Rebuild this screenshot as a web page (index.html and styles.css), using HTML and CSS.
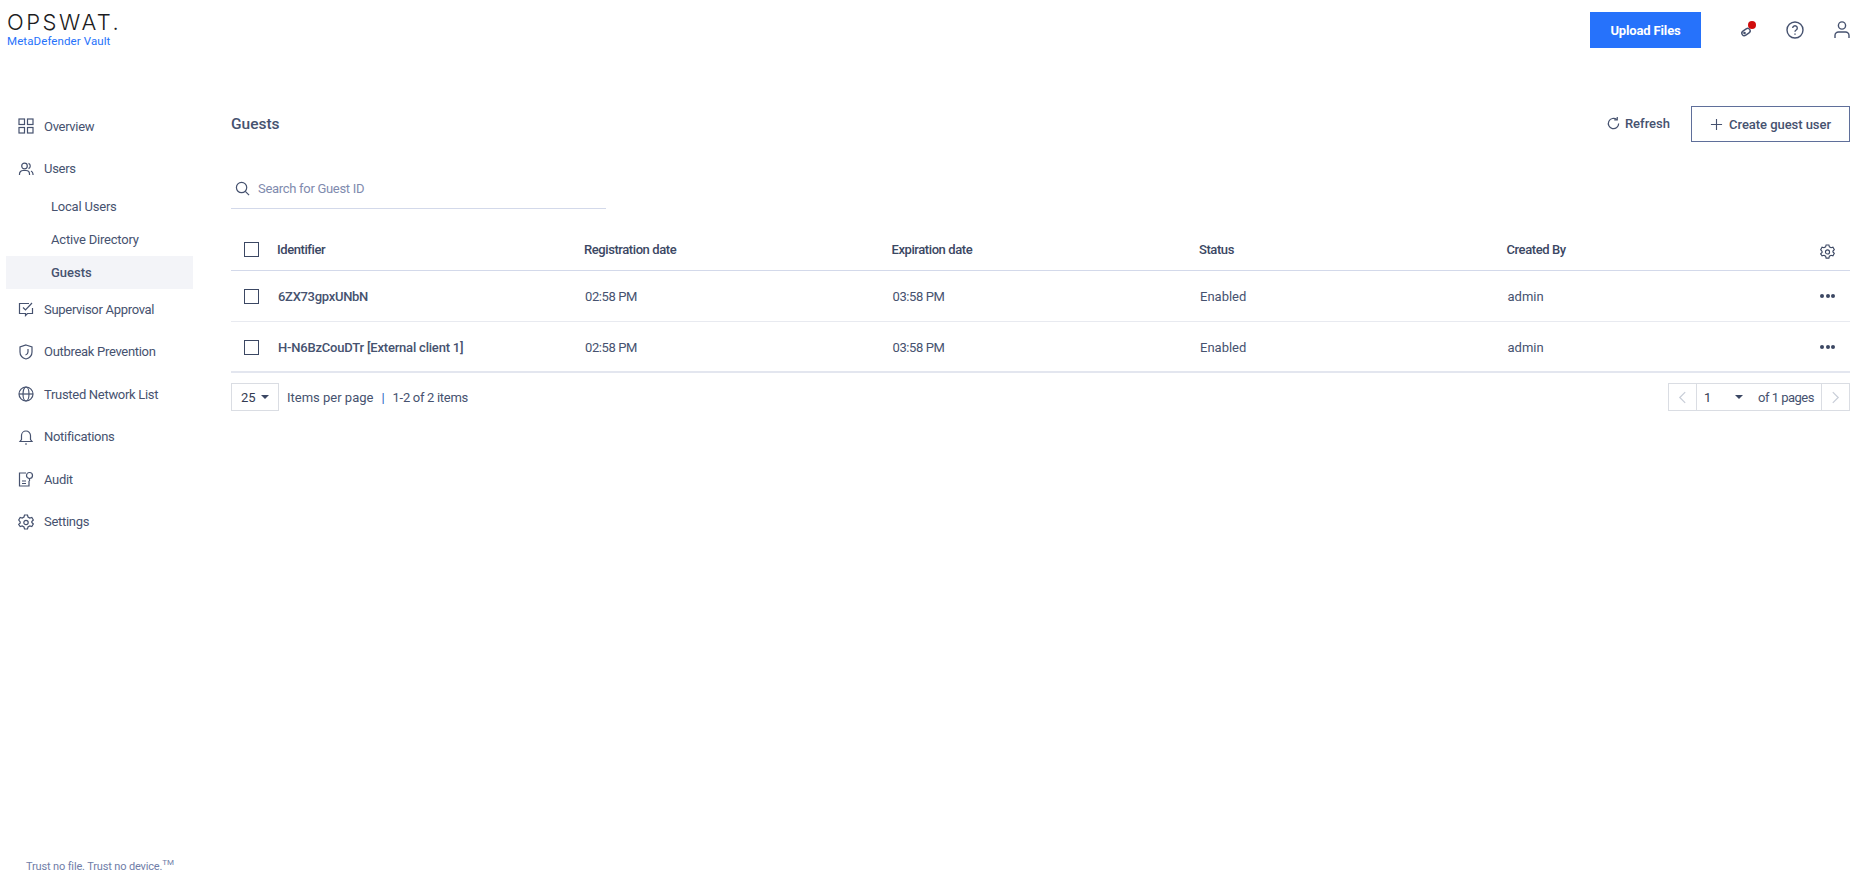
FILE: index.html
```html
<!DOCTYPE html>
<html lang="en">
<head>
<meta charset="utf-8">
<title>Guests</title>
<link rel="stylesheet" href="styles.css">
</head>
<body>
<div class="app">
  <header class="topbar">
    <div class="brand">
      <div class="logo">OPSWAT.</div>
      <div class="product">MetaDefender Vault</div>
    </div>
    <div class="top-actions">
      <button class="upload">Upload Files</button>
      <span class="top-icon key">
        <svg viewBox="0 0 20 20" width="20" height="20" fill="none" stroke="#46526f" stroke-width="1.4"><rect x="3.5" y="9.500" width="9" height="5" rx="2.500" transform="rotate(-35 8 12)"/><circle cx="6.500" cy="13" r=".6"/></svg>
        <i class="dot"></i>
      </span>
      <span class="top-icon">
        <svg viewBox="0 0 20 20" width="20" height="20" fill="none" stroke="#46526f" stroke-width="1.4"><circle cx="10" cy="10" r="8"/><path d="M7.7 8a2.3 2.3 0 1 1 3.5 2c-.8.5-1.2 1-1.2 1.8"/><path d="M10 13.6v1.2"/></svg>
      </span>
      <span class="top-icon">
        <svg viewBox="0 0 20 20" width="20" height="20" fill="none" stroke="#46526f" stroke-width="1.4"><circle cx="10" cy="5.5" r="3.6"/><path d="M3 18v-2.500a3.500 3.500 0 0 1 3.500-3.500h7a3.500 3.500 0 0 1 3.500 3.500V18"/></svg>
      </span>
    </div>
  </header>

  <div class="body">
    <aside class="sidebar">
      <nav class="nav">
        <a class="nav-item"><svg viewBox="0 0 16 16" class="ico"><rect x="1" y="1" width="5.500" height="5.500"/><rect x="9.500" y="1" width="5.500" height="5.500"/><rect x="1" y="9.500" width="5.500" height="5.500"/><rect x="9.500" y="9.500" width="5.500" height="5.500"/></svg>Overview</a>
        <a class="nav-item"><svg viewBox="0 0 16 16" class="ico"><circle cx="6.500" cy="5" r="2.800"/><path d="M1.500 14v-1a3.500 3.500 0 0 1 3.500-3.500h3a3.500 3.500 0 0 1 3.500 3.500v1"/><path d="M10.500 2.400a2.800 2.800 0 0 1 0 5.200M13 10a3.500 3.500 0 0 1 2 3v1"/></svg>Users</a>
        <div class="subnav">
          <a class="sub-item">Local Users</a>
          <a class="sub-item">Active Directory</a>
          <a class="sub-item active">Guests</a>
        </div>
        <a class="nav-item"><svg viewBox="0 0 16 16" class="ico"><path d="M14.500 7v5.500h-5l-2 2v-2H1.500V2.500H11"/><path d="M5 6.500l2.500 2.500 6.500-7"/></svg>Supervisor Approval</a>
        <a class="nav-item"><svg viewBox="0 0 16 16" class="ico"><path d="M8 1l6 2v5c0 3.500-2.500 6-6 7-3.500-1-6-3.500-6-7V3z"/><path d="M10 5v3c0 1.500-1 2.500-2.500 3"/></svg>Outbreak Prevention</a>
        <a class="nav-item"><svg viewBox="0 0 16 16" class="ico"><circle cx="8" cy="8" r="7"/><ellipse cx="8" cy="8" rx="3" ry="7"/><path d="M1 8h14"/></svg>Trusted Network List</a>
        <a class="nav-item"><svg viewBox="0 0 16 16" class="ico"><path d="M2 12.500h12l-1.500-2V6.500a4.500 4.500 0 0 0-9 0v4z"/><path d="M7 15h2"/></svg>Notifications</a>
        <a class="nav-item"><svg viewBox="0 0 16 16" class="ico"><path d="M8 2H1.500v13h9.500V10"/><circle cx="11.500" cy="4.500" r="3"/><path d="M11.500 7.500V10M4 10h4M4 12.500h4"/></svg>Audit</a>
        <a class="nav-item"><svg viewBox="0 0 16 16" class="ico"><path d="M6.500 1h3l.5 2 1.800 1 2-.6 1.500 2.600-1.500 1.500v1l1.500 1.500-1.500 2.600-2-.6-1.800 1-.5 2h-3l-.5-2-1.800-1-2 .6L.7 10.500 2.200 9V8L.7 6l1.500-2.600 2 .6L6 3z"/><circle cx="8" cy="8.500" r="2.200"/></svg>Settings</a>
      </nav>
      <div class="tagline">Trust no file. Trust no device.<sup>TM</sup></div>
    </aside>

    <main class="main">
      <div class="title-row">
        <h1>Guests</h1>
        <div class="title-actions">
          <button class="refresh"><svg viewBox="0 0 16 16" width="15" height="15" fill="none" stroke="#46526f" stroke-width="1.300"><path d="M13.500 8A5.500 5.500 0 1 1 11.500 3.800"/><path d="M12 1v3.200H8.800" /></svg>Refresh</button>
          <button class="create"><svg viewBox="0 0 14 14" width="13" height="13" fill="none" stroke="#46526f" stroke-width="1.200"><path d="M7 1v12M1 7h12"/></svg>Create guest user</button>
        </div>
      </div>

      <div class="search">
        <svg viewBox="0 0 16 16" width="15" height="15" fill="none" stroke="#46526f" stroke-width="1.300"><circle cx="7" cy="7" r="5.500"/><path d="M11 11l4 4"/></svg>
        <span>Search for Guest ID</span>
      </div>

      <div class="table">
        <div class="row head">
          <span class="check"></span>
          <span class="cell c1">Identifier</span>
          <span class="cell">Registration date</span>
          <span class="cell">Expiration date</span>
          <span class="cell">Status</span>
          <span class="cell">Created By</span>
          <span class="end"><svg viewBox="0 0 16 16" width="15" height="15" fill="none" stroke="#3b4763" stroke-width="1.200"><path d="M6.500 1h3l.5 2 1.800 1 2-.6 1.500 2.600-1.500 1.500v1l1.500 1.500-1.500 2.600-2-.6-1.800 1-.5 2h-3l-.5-2-1.800-1-2 .6L.7 10.500 2.200 9V8L.7 6l1.500-2.600 2 .6L6 3z"/><circle cx="8" cy="8.500" r="2.200"/></svg></span>
        </div>
        <div class="row">
          <span class="check"></span>
          <span class="cell c1 strong">6ZX73gpxUNbN</span>
          <span class="cell time">02:58 PM</span>
          <span class="cell time">03:58 PM</span>
          <span class="cell">Enabled</span>
          <span class="cell">admin</span>
          <span class="end dots"><i></i><i></i><i></i></span>
        </div>
        <div class="row last">
          <span class="check"></span>
          <span class="cell c1 strong wide">H-N6BzCouDTr [External client 1]</span>
          <span class="cell time">02:58 PM</span>
          <span class="cell time">03:58 PM</span>
          <span class="cell">Enabled</span>
          <span class="cell">admin</span>
          <span class="end dots"><i></i><i></i><i></i></span>
        </div>
      </div>

      <div class="pager">
        <div class="pager-left">
          <span class="size">25<i class="caret"></i></span>
          <span class="per">Items per page</span>
          <span class="sep">|</span>
          <span class="count">1-2 of 2 items</span>
        </div>
        <div class="pages">
          <span class="arrow"><svg viewBox="0 0 10 14" width="9" height="13" fill="none" stroke="#c9ced8" stroke-width="1.400"><path d="M8 1L2 7l6 6"/></svg></span>
          <span class="page-no"><b>1</b><i class="caret"></i><span class="of">of 1 pages</span></span>
          <span class="arrow"><svg viewBox="0 0 10 14" width="9" height="13" fill="none" stroke="#c9ced8" stroke-width="1.400"><path d="M2 1l6 6-6 6"/></svg></span>
        </div>
      </div>
    </main>
  </div>
</div>
</body>
</html>
```

FILE: styles.css
```css
* { box-sizing: border-box; }
html, body { margin: 0; height: 100%; }
body { font-family: Roboto, "Liberation Sans", sans-serif; font-size: 13px; color: #3b4763; background: #fff; overflow: hidden; }
.app { display: flex; flex-direction: column; height: 875px; }
.topbar { height: 63px; display: flex; justify-content: space-between; padding: 12px 0 0 7px; flex: none; }
.logo { font-family: Inter, sans-serif; font-size: 22px; line-height: 20px; letter-spacing: 2.500px; color: #1c1c22; font-weight: 300; white-space: nowrap; }
.product { font-size: 11.500px; color: #2672fb; margin-top: 2px; line-height: 14px; letter-spacing: .1px; }
.top-actions { display: flex; align-items: flex-start; padding-right: 9px; }
.upload { width: 111px; height: 36px; border: 0; background: #2672fb; color: #fff; font: 700 13px Roboto, sans-serif; letter-spacing: -.15px; margin: 0 37px 0 0; }
.top-icon { width: 20px; height: 20px; margin: 8px 0 0 0; position: relative; display: block; }
.top-icon + .top-icon { margin-left: 27px; }
.dot { position: absolute; width: 8px; height: 8px; border-radius: 50%; background: #d00c0c; left: 10px; top: 1px; }

.body { flex: 1; display: flex; min-height: 0; }
.sidebar { width: 231px; flex: none; display: flex; flex-direction: column; justify-content: space-between; }
.nav { padding-top: 42px; }
.nav-item { display: flex; align-items: center; height: 42.500px; padding-left: 18px; color: #46526f; font-size: 13px; letter-spacing: -.3px; }
.ico { width: 16px; height: 16px; margin-right: 10px; fill: none; stroke: #46526f; stroke-width: 1.200; flex: none; }
.subnav { padding: 0 0 0 6px; margin-bottom: -1px; }
.sub-item { display: flex; align-items: center; width: 187px; height: 33px; padding-left: 45px; color: #46526f; letter-spacing: -.2px; }
.sub-item.active { font-weight: 500; background: #f3f4f8; letter-spacing: 0; }
.tagline { padding: 0 0 1px 26px; font-size: 11px; color: #6f7da8; line-height: 14px; letter-spacing: -.15px; }
.tagline sup { font-size: 8px; line-height: 0; }

.main { flex: 1; padding-right: 11px; min-width: 0; }
.title-row { display: flex; justify-content: space-between; align-items: flex-start; padding-top: 43px; height: 102px; }
h1 { margin: 0; font-size: 15.500px; line-height: 36px; font-weight: 500; color: #46526f; }
.title-actions { display: flex; align-items: flex-start; }
button { font-family: inherit; }
.refresh { display: flex; align-items: center; gap: 4px; background: none; border: 0; padding: 0; margin: -1px 21px 0 0; height: 36px; font-size: 13px; font-weight: 500; color: #46526f; }
.create { display: flex; align-items: center; justify-content: center; gap: 6px; width: 159px; height: 36px; background: #fff; border: 1px solid #5f6f9a; font-size: 13px; font-weight: 500; letter-spacing: -.05px; color: #46526f; padding: 0; }
.search { display: flex; align-items: center; gap: 8px; width: 375px; height: 44px; padding: 4px 0 0 4px; border-bottom: 1px solid #d3d9ea; color: #7f8bae; }
.search span { font-size: 13px; letter-spacing: -.3px; }

.table { margin-top: 20px; }
.row { display: flex; align-items: center; height: 51px; padding-left: 13px; border-bottom: 1px solid #e8eaf0; }
.row.head { height: 42px; border-bottom-color: #d3d9ea; font-weight: 500; letter-spacing: -.42px; }
.row.last { border-bottom: 2px solid #e3e6ef; height: 51px; padding-top: 1px; }
.check { width: 15px; height: 15px; border: 1px solid #3b4763; flex: none; margin-right: 18px; }
.cell { width: 307.500px; flex: none; color: #46526f; }
.head .cell { color: #3b4763; }
.cell.c1 { width: 307px; }
.row:not(.head) .cell { padding-left: 1px; }
.cell.strong { font-weight: 500; letter-spacing: -.3px; }
.cell.strong.wide { letter-spacing: -.2px; }
.cell.time { letter-spacing: -.4px; }
.end { margin-left: auto; width: 30px; display: flex; gap: 1.500px; align-items: center; }
.head .end { padding-top: 4px; }
.head .end svg { flex: none; }
.dots i { width: 4px; height: 4px; border-radius: 50%; background: #3b4763; }

.pager { display: flex; justify-content: space-between; align-items: center; margin-top: 10px; font-size: 13px; color: #46526f; }
.pager-left { display: flex; align-items: center; }
.size { display: flex; align-items: center; justify-content: space-between; width: 48px; height: 28px; padding: 0 9px; border: 1px solid #dadde3; margin-right: 8px; color: #333b52; }
.caret { width: 0; height: 0; border-left: 4px solid transparent; border-right: 4px solid transparent; border-top: 4px solid #3b4763; display: block; }
.sep { margin: 0 8px; color: #2b5fc4; }
.count { letter-spacing: -.3px; }
.pages { display: flex; height: 28px; width: 182px; border: 1px solid #dadde3; }
.arrow { width: 27px; display: flex; align-items: center; justify-content: center; flex: none; }
.page-no { flex: 1; display: flex; align-items: center; padding: 0 7px 0 7px; border-left: 1px solid #dadde3; border-right: 1px solid #dadde3; white-space: nowrap; }
.page-no b { font-weight: 400; color: #333b52; width: 31px; flex: none; }
.page-no .caret { margin-right: 15px; flex: none; }
.of { letter-spacing: -.5px; }
```
